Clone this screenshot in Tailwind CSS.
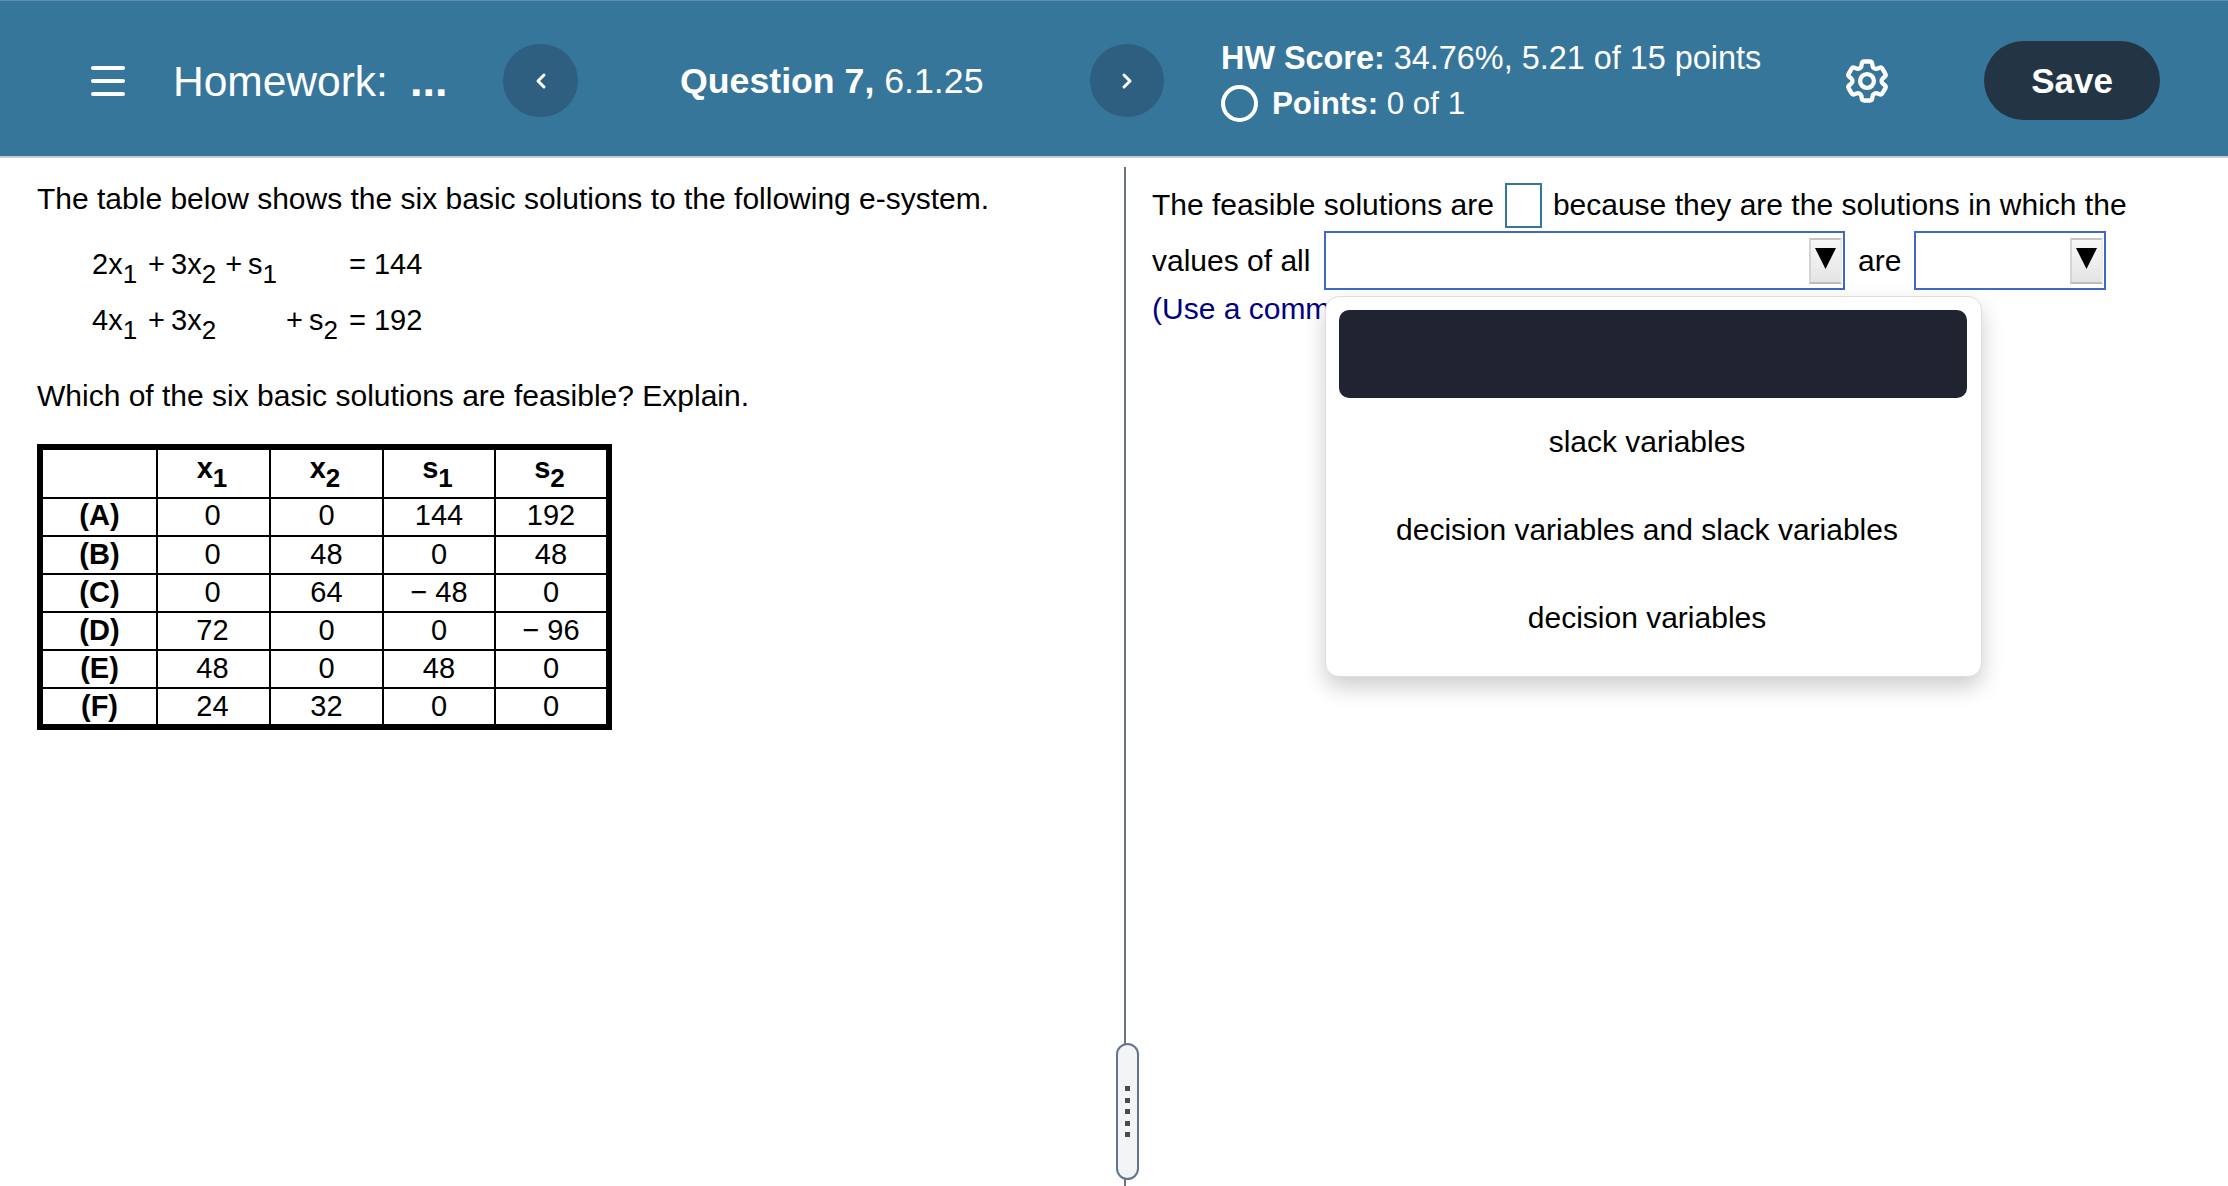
<!DOCTYPE html>
<html lang="en">
<head>
<meta charset="utf-8">
<title>Homework</title>
<script src="https://cdn.jsdelivr.net/npm/@tailwindcss/browser@4"></script>
</head>
<body class="m-0 bg-white">
<div class="relative w-[2228px] h-[1186px] overflow-hidden bg-white text-black font-['Liberation_Sans',Arial,sans-serif] text-[30px] leading-[40px]">

  <header class="flex items-center h-[158px] pl-[91px] pt-[4px] bg-[#36769a] border-t border-t-[#5f90ac] border-b-2 border-b-[#c9cdd1] text-white">
    <div class="w-[82px] flex">
      <div class="w-[34px] flex flex-col gap-[9px]">
        <span class="block h-[4px] rounded-full bg-white"></span>
        <span class="block h-[4px] rounded-full bg-white"></span>
        <span class="block h-[4px] rounded-full bg-white"></span>
      </div>
    </div>
    <div class="w-[330px] pt-[2px] text-[42.5px] leading-[50px] whitespace-nowrap">Homework:<span class="font-bold text-[45px] ml-[22px]">...</span></div>
    <button class="w-[75px] h-[73px] rounded-full bg-[#2e5f80] flex items-center justify-center">
      <svg class="w-[16px] h-[20px]" viewBox="0 0 16 20" fill="none" stroke="white" stroke-width="3" stroke-linecap="round" stroke-linejoin="round"><path d="M11 4 L5 10 L11 16"/></svg>
    </button>
    <div class="ml-[102px] w-[410px] text-[35.7px] leading-[44px] whitespace-nowrap"><b>Question 7,</b> 6.1.25</div>
    <button class="w-[74px] h-[73px] rounded-full bg-[#2e5f80] flex items-center justify-center">
      <svg class="w-[16px] h-[20px]" viewBox="0 0 16 20" fill="none" stroke="white" stroke-width="3" stroke-linecap="round" stroke-linejoin="round"><path d="M5 4 L11 10 L5 16"/></svg>
    </button>
    <div class="ml-[57px] w-[618px] text-[32.4px] leading-[45px] whitespace-nowrap">
      <div><b>HW Score:</b> 34.76%, 5.21 of 15 points</div>
      <div class="flex items-center text-[31.3px]">
        <span class="block w-[37px] h-[37px] rounded-full border-[4px] border-white mr-[14px]"></span>
        <span><b>Points:</b> 0 of 1</span>
      </div>
    </div>
    <div class="w-[56px] h-[56px] flex items-center justify-center">
      <svg class="w-[52px] h-[52px]" viewBox="0 0 24 24" fill="none" stroke="white" stroke-width="2" stroke-linecap="round" stroke-linejoin="round"><path d="M9.594 3.94c.09-.542.56-.94 1.11-.94h2.593c.55 0 1.02.398 1.11.94l.213 1.281c.063.374.313.686.645.87.074.04.147.083.22.127.325.196.72.257 1.075.124l1.217-.456a1.125 1.125 0 0 1 1.37.49l1.296 2.247a1.125 1.125 0 0 1-.26 1.431l-1.003.827c-.293.241-.438.613-.43.992a7.723 7.723 0 0 1 0 .255c-.008.378.137.75.43.991l1.004.827c.424.35.534.955.26 1.43l-1.298 2.247a1.125 1.125 0 0 1-1.369.491l-1.217-.456c-.355-.133-.75-.072-1.076.124a6.47 6.47 0 0 1-.22.128c-.331.183-.581.495-.644.869l-.213 1.281c-.09.543-.56.94-1.11.94h-2.594c-.55 0-1.019-.398-1.11-.94l-.213-1.281c-.062-.374-.312-.686-.644-.87a6.52 6.52 0 0 1-.22-.127c-.325-.196-.72-.257-1.076-.124l-1.217.456a1.125 1.125 0 0 1-1.369-.49l-1.297-2.247a1.125 1.125 0 0 1 .26-1.431l1.004-.827c.292-.24.437-.613.43-.991a6.932 6.932 0 0 1 0-.255c.007-.38-.138-.751-.43-.992l-1.004-.827a1.125 1.125 0 0 1-.26-1.43l1.297-2.247a1.125 1.125 0 0 1 1.37-.491l1.216.456c.356.133.751.072 1.076-.124.072-.044.146-.086.22-.128.332-.183.582-.495.644-.869l.214-1.28Z"/><circle cx="12" cy="12" r="3.2"/></svg>
    </div>
    <button class="ml-[89px] w-[176px] h-[79px] rounded-full bg-[#233545] text-white font-bold text-[35px]">Save</button>
  </header>

  <main class="flex h-[1028px]">
    <section class="w-[1124px] pl-[37px] pt-[21px]">
      <p class="whitespace-nowrap">The table below shows the six basic solutions to the following e-system.</p>
      <div class="mt-[18px] ml-[55px] grid grid-cols-[194px_63px_auto] w-max text-[29px] leading-[55px] h-[111px] whitespace-nowrap">
        <div>2x<sub class="text-[26px] align-[-9px] static">1</sub><span class="ml-[11px] mr-[6px]">+</span>3x<sub class="text-[26px] align-[-9px] static">2</sub><span class="ml-[9px] mr-[6px]">+</span>s<sub class="text-[26px] align-[-9px] static">1</sub></div>
        <div></div>
        <div>= 144</div>
        <div>4x<sub class="text-[26px] align-[-9px] static">1</sub><span class="ml-[11px] mr-[6px]">+</span>3x<sub class="text-[26px] align-[-9px] static">2</sub></div>
        <div>+<span class="ml-[6px]">s</span><sub class="text-[26px] align-[-9px] static">2</sub></div>
        <div>= 192</div>
      </div>
      <p class="mt-[28px] whitespace-nowrap">Which of the six basic solutions are feasible? Explain.</p>
      <div class="mt-[28px] w-[575px] h-[286px] border-[6px] border-black">
        <table class="w-full h-full table-fixed border-separate border-spacing-0 text-center text-[29px] leading-none">
          <colgroup>
            <col class="w-[113px]"><col class="w-[113px]"><col class="w-[113px]"><col class="w-[112px]"><col>
          </colgroup>
          <tbody>
            <tr class="h-[47px] font-bold align-top">
              <td></td>
              <td class="border-l-2 border-black pt-[4px] pr-[3px]">x<sub class="text-[26px] align-[-9px] static">1</sub></td>
              <td class="border-l-2 border-black pt-[4px] pr-[3px]">x<sub class="text-[26px] align-[-9px] static">2</sub></td>
              <td class="border-l-2 border-black pt-[4px] pr-[3px]">s<sub class="text-[26px] align-[-9px] static">1</sub></td>
              <td class="border-l-2 border-black pt-[4px] pr-[3px]">s<sub class="text-[26px] align-[-9px] static">2</sub></td>
            </tr>
            <tr class="h-[38px]">
              <td class="border-t-2 border-black font-bold pb-[3px]">(A)</td>
              <td class="border-t-2 border-l-2 border-black pb-[3px] pr-[2px]">0</td>
              <td class="border-t-2 border-l-2 border-black pb-[3px]">0</td>
              <td class="border-t-2 border-l-2 border-black pb-[3px]">144</td>
              <td class="border-t-2 border-l-2 border-black pb-[3px]">192</td>
            </tr>
            <tr class="h-[38px]">
              <td class="border-t-2 border-black font-bold pb-[2px]">(B)</td>
              <td class="border-t-2 border-l-2 border-black pb-[2px] pr-[2px]">0</td>
              <td class="border-t-2 border-l-2 border-black pb-[2px]">48</td>
              <td class="border-t-2 border-l-2 border-black pb-[2px]">0</td>
              <td class="border-t-2 border-l-2 border-black pb-[2px]">48</td>
            </tr>
            <tr class="h-[38px]">
              <td class="border-t-2 border-black font-bold pb-[2px]">(C)</td>
              <td class="border-t-2 border-l-2 border-black pb-[2px] pr-[2px]">0</td>
              <td class="border-t-2 border-l-2 border-black pb-[2px]">64</td>
              <td class="border-t-2 border-l-2 border-black pb-[2px]">− 48</td>
              <td class="border-t-2 border-l-2 border-black pb-[2px]">0</td>
            </tr>
            <tr class="h-[38px]">
              <td class="border-t-2 border-black font-bold pb-[2px]">(D)</td>
              <td class="border-t-2 border-l-2 border-black pb-[2px] pr-[2px]">72</td>
              <td class="border-t-2 border-l-2 border-black pb-[2px]">0</td>
              <td class="border-t-2 border-l-2 border-black pb-[2px]">0</td>
              <td class="border-t-2 border-l-2 border-black pb-[2px]">− 96</td>
            </tr>
            <tr class="h-[38px]">
              <td class="border-t-2 border-black font-bold pb-[2px]">(E)</td>
              <td class="border-t-2 border-l-2 border-black pb-[2px] pr-[2px]">48</td>
              <td class="border-t-2 border-l-2 border-black pb-[2px]">0</td>
              <td class="border-t-2 border-l-2 border-black pb-[2px]">48</td>
              <td class="border-t-2 border-l-2 border-black pb-[2px]">0</td>
            </tr>
            <tr class="h-[38px]">
              <td class="border-t-2 border-black font-bold pb-[2px]">(F)</td>
              <td class="border-t-2 border-l-2 border-black pb-[2px] pr-[2px]">24</td>
              <td class="border-t-2 border-l-2 border-black pb-[2px]">32</td>
              <td class="border-t-2 border-l-2 border-black pb-[2px]">0</td>
              <td class="border-t-2 border-l-2 border-black pb-[2px]">0</td>
            </tr>
          </tbody>
        </table>
      </div>
    </section>

    <div class="mt-[9px] w-[2px] bg-[#6b7280]"></div>

    <section class="flex-1 pl-[26px] pt-[25px]">
      <div class="flex items-center h-[45px] whitespace-nowrap">
        <span class="pb-[2px]">The feasible solutions are</span>
        <span class="block ml-[11px] mr-[11px] w-[37px] h-[45px] border-2 border-[#36769a] bg-white"></span>
        <span class="pb-[2px]">because they are the solutions in which the</span>
      </div>
      <div class="flex items-center h-[59px] mt-[3px] whitespace-nowrap">
        <span class="w-[172px]">values of all</span>
        <div class="w-[521px] h-[59px] border-2 border-[#4169c4] bg-white flex items-center justify-end pr-[1px]">
          <div class="w-[33px] h-[46px] pt-[8px] flex justify-center border-2 border-t-[#c4c4c4] border-b-[#bcbcbc] border-l-[#d4d4d4] border-r-[#ececec] bg-gradient-to-b from-[#f8f8f8] to-[#e4e4e4]">
            <svg class="w-[21px] h-[21px]" viewBox="0 0 21 21"><path d="M0 0 H21 L10.5 21 Z" fill="#000"/></svg>
          </div>
        </div>
        <span class="ml-[13px] w-[56px]">are</span>
        <div class="w-[192px] h-[59px] border-2 border-[#4169c4] bg-white flex items-center justify-end pr-[1px]">
          <div class="w-[33px] h-[46px] pt-[8px] flex justify-center border-2 border-t-[#c4c4c4] border-b-[#bcbcbc] border-l-[#d4d4d4] border-r-[#ececec] bg-gradient-to-b from-[#f8f8f8] to-[#e4e4e4]">
            <svg class="w-[21px] h-[21px]" viewBox="0 0 21 21"><path d="M0 0 H21 L10.5 21 Z" fill="#000"/></svg>
          </div>
        </div>
      </div>
      <p class="-mt-px text-[#000080] whitespace-nowrap">(Use a comma to separate answers as needed.)</p>
    </section>
  </main>

  <div class="absolute left-[1116px] top-[1043px] w-[23px] h-[137px] rounded-full border-2 border-[#64748b] bg-[#f3f4f6] flex flex-col items-center justify-center gap-[6.5px]">
    <span class="block w-[5px] h-[5px] bg-[#4b4b4b]"></span>
    <span class="block w-[5px] h-[5px] bg-[#4b4b4b]"></span>
    <span class="block w-[5px] h-[5px] bg-[#4b4b4b]"></span>
    <span class="block w-[5px] h-[5px] bg-[#4b4b4b]"></span>
    <span class="block w-[5px] h-[5px] bg-[#4b4b4b]"></span>
  </div>

  <div class="absolute left-[1325px] top-[296px] w-[657px] h-[381px] p-[13px] pr-[14px] rounded-[14px] border border-[#dedede] bg-white shadow-[0_10px_22px_rgba(0,0,0,0.2)]">
    <div class="h-[88px] rounded-[10px] bg-[#1f2430]"></div>
    <ul class="pr-[12px]">
      <li class="h-[88px] flex items-center justify-center">slack variables</li>
      <li class="h-[88px] flex items-center justify-center">decision variables and slack variables</li>
      <li class="h-[88px] flex items-center justify-center">decision variables</li>
    </ul>
  </div>
</div>
</body>
</html>
